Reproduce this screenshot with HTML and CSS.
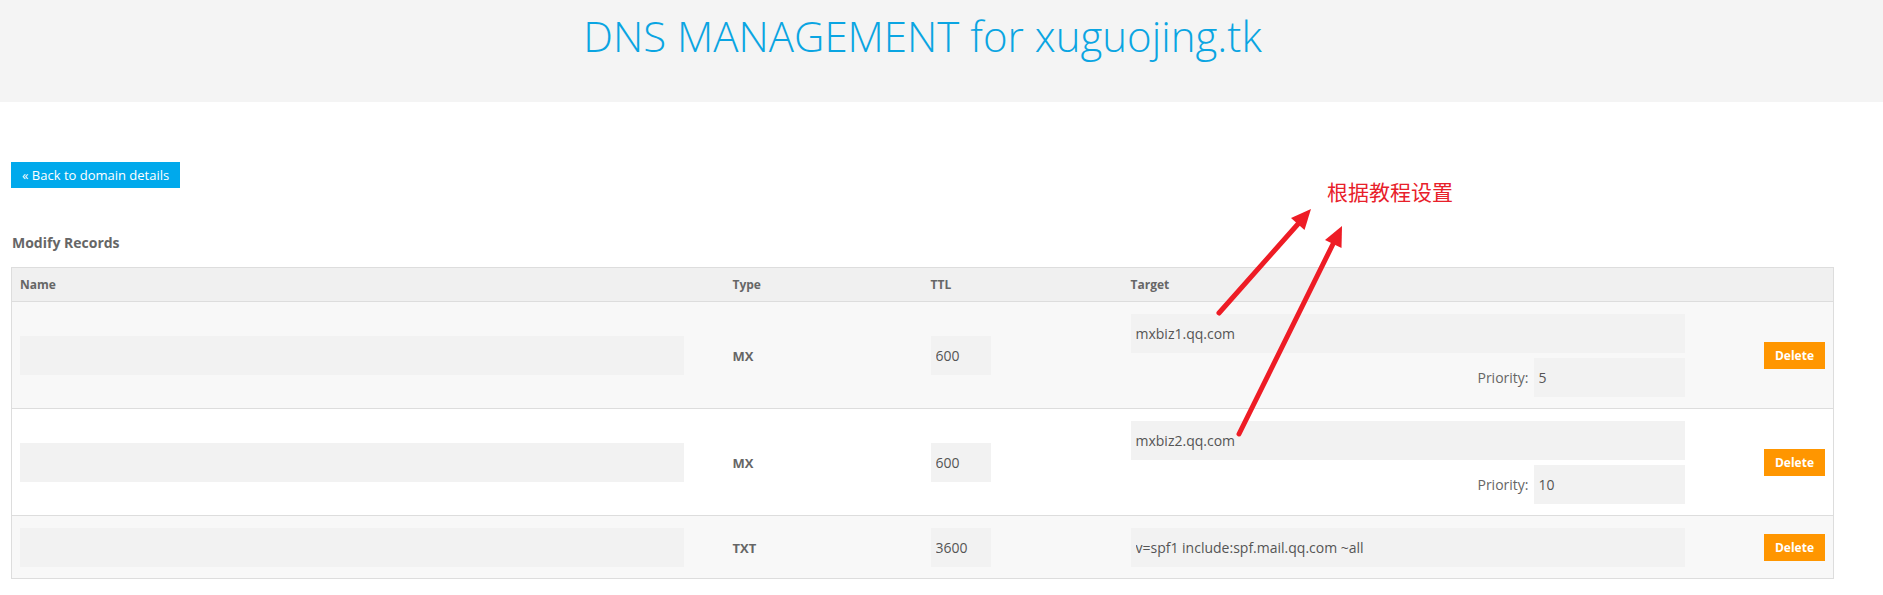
FILE: index.html
```html
<!DOCTYPE html>
<html lang="zh-CN">
<head>
    <meta charset="UTF-8">
    <meta name="viewport" content="width=device-width, initial-scale=1.0">
    <title>DNS Management</title>
    <link rel="stylesheet" href="styles.css">
</head>
<body>

    <div class="page-header">
        <div class="container">
            <h1>DNS MANAGEMENT for xuguojing.tk</h1>
        </div>
    </div>

    <div class="container">
        <a class="back-btn" href="#">&laquo; Back to domain details</a>

        <h3>Modify Records</h3>

        <table class="records">
            <colgroup>
                <col class="col-name">
                <col class="col-type">
                <col class="col-ttl">
                <col class="col-target">
                <col>
            </colgroup>
            <thead>
                <tr>
                    <th>Name</th>
                    <th>Type</th>
                    <th>TTL</th>
                    <th>Target</th>
                    <th></th>
                </tr>
            </thead>
            <tbody>
                <tr>
                    <td><input class="name-input" type="text" value=""></td>
                    <td class="type">MX</td>
                    <td><input class="ttl-input" type="text" value="600"></td>
                    <td>
                        <input class="target-input" type="text" value="mxbiz1.qq.com">
                        <div class="priority">
                            <label>Priority:</label>
                            <input class="priority-input" type="text" value="5">
                        </div>
                    </td>
                    <td class="action"><button class="delete-btn">Delete</button></td>
                </tr>
                <tr>
                    <td><input class="name-input" type="text" value=""></td>
                    <td class="type">MX</td>
                    <td><input class="ttl-input" type="text" value="600"></td>
                    <td>
                        <input class="target-input" type="text" value="mxbiz2.qq.com">
                        <div class="priority">
                            <label>Priority:</label>
                            <input class="priority-input" type="text" value="10">
                        </div>
                    </td>
                    <td class="action"><button class="delete-btn">Delete</button></td>
                </tr>
                <tr>
                    <td><input class="name-input" type="text" value=""></td>
                    <td class="type">TXT</td>
                    <td><input class="ttl-input" type="text" value="3600"></td>
                    <td><input class="target-input" type="text" value="v=spf1 include:spf.mail.qq.com ~all"></td>
                    <td class="action"><button class="delete-btn">Delete</button></td>
                </tr>
            </tbody>
        </table>
    </div>

    <div class="note">根据教程设置</div>
    <svg class="arrows" width="1883" height="595" viewBox="0 0 1883 595">
        <line x1="1219" y1="313" x2="1298" y2="224" stroke="#ee1c25" stroke-width="5" stroke-linecap="round"/>
        <polygon points="1311,209 1291,218 1304.5,230" fill="#ee1c25"/>
        <line x1="1239" y1="434" x2="1333" y2="244" stroke="#ee1c25" stroke-width="5" stroke-linecap="round"/>
        <polygon points="1342,226 1325,240 1341.5,248" fill="#ee1c25"/>
    </svg>

</body>
</html>
```

FILE: styles.css
```css
body {
    font-family: "Open Sans", Arial, sans-serif;
    font-size: 13px;
    color: #666;
    background-color: #fff;
    margin: 0;
    position: relative;
}
.container {
    width: 1823px;
    padding: 0 11px;
}
.page-header {
    background-color: #f4f4f4;
    height: 102px;
}
.page-header h1 {
    margin: 0;
    padding-top: 11px;
    font-size: 42px;
    font-weight: 300;
    line-height: 1.2;
    color: #0aa5e2;
    text-align: center;
}
.back-btn {
    display: block;
    width: fit-content;
    margin-top: 60px;
    height: 26px;
    line-height: 26px;
    padding: 0 11px;
    background-color: #00a9ec;
    color: white;
    font-size: 13px;
    text-decoration: none;
}
h3 {
    margin: 45px 0 14px 1px;
    font-size: 14px;
    line-height: 20px;
    font-weight: bold;
    color: #666;
}
.records {
    width: 1823px;
    table-layout: fixed;
    border-collapse: collapse;
    border: 1px solid #ddd;
}
.col-name {
    width: 713px;
}
.col-type {
    width: 198px;
}
.col-ttl {
    width: 200px;
}
.col-target {
    width: 578px;
}
.records th {
    background-color: #f0f0f0;
    text-align: left;
    font-size: 12px;
    font-weight: bold;
    color: #666;
    padding: 8px 8px 7px;
    line-height: 18px;
    border-bottom: 1px solid #ddd;
}
.records td {
    padding: 12px 8px 11px;
    border-bottom: 1px solid #ddd;
    vertical-align: middle;
}
.records tbody tr:nth-child(odd) {
    background-color: #f8f8f8;
}
.records tbody tr:nth-child(even) {
    background-color: #fff;
}
.type {
    font-weight: bold;
    font-size: 13px;
}
input {
    font-family: "Open Sans", Arial, sans-serif;
    font-size: 14px;
    color: #555;
    background-color: #f2f2f2;
    border: none;
    outline: none;
    height: 39px;
    padding: 0 5px;
    box-sizing: border-box;
    display: block;
}
.name-input {
    width: 664px;
}
.ttl-input {
    width: 60px;
}
.target-input {
    width: 554px;
}
.priority {
    width: 554px;
    display: flex;
    justify-content: flex-end;
    align-items: center;
    gap: 5px;
    margin-top: 5px;
}
.priority label {
    font-size: 14px;
    color: #666;
}
.priority-input {
    width: 151px;
}
.action {
    text-align: right;
}
.delete-btn {
    background-color: #ff9600;
    color: white;
    font-family: "Open Sans", Arial, sans-serif;
    font-weight: bold;
    font-size: 12px;
    height: 27px;
    width: 61px;
    padding: 0;
    border: none;
    cursor: pointer;
}
.note {
    position: absolute;
    left: 1327px;
    top: 181px;
    font-family: "Noto Sans CJK SC", sans-serif;
    font-size: 21px;
    line-height: 21px;
    color: #e8202a;
}
.arrows {
    position: absolute;
    left: 0;
    top: 0;
    pointer-events: none;
}
```
